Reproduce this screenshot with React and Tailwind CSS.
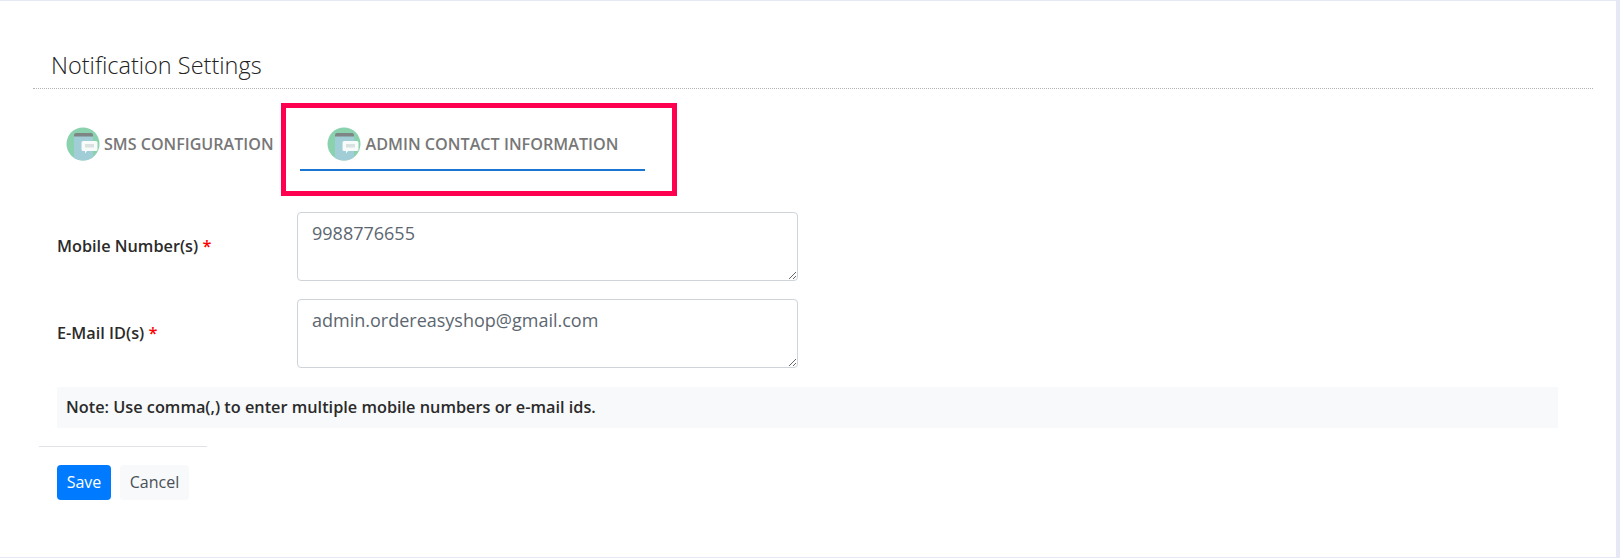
import React from 'react'

function TabIcon({ id }) {
  return (
    <svg width="34" height="34" viewBox="0 0 34 34" className="shrink-0">
      <defs>
        <clipPath id={id}>
          <circle cx="17" cy="17" r="16.5" />
        </clipPath>
      </defs>
      <circle cx="17" cy="17" r="16.5" fill="#8ad1ae" />
      <g clipPath={`url(#${id})`}>
        <rect x="8" y="6" width="19" height="30" rx="2" fill="#a0cdd6" />
        <path d="M8 9.500V8a2 2 0 0 1 2-2h15a2 2 0 0 1 2 2v1.500z" fill="#7f8585" />
      </g>
      <path d="M17 14h13a1.500 1.500 0 0 1 1.500 1.500v7a1.500 1.500 0 0 1-1.500 1.500h-9l-2 2.500v-2.500h-2a1.500 1.500 0 0 1-1.500-1.500v-7A1.500 1.500 0 0 1 17 14z" fill="#f7fbfa" />
      <rect x="19" y="17" width="9" height="3.500" fill="#d9e1e1" />
    </svg>
  )
}

function Field({ label, value, className }) {
  return (
    <div className={`flex items-center ${className}`}>
      <label className="w-[240px] shrink-0 text-[16.300px] font-semibold text-[#2b2b2b]">
        {label} <span className="text-[#ff0000]">*</span>
      </label>
      <textarea
        defaultValue={value}
        className="w-[501px] h-[69px] rounded border border-[#ced4da] px-[14px] py-[7px] text-[18px] leading-[27px] text-[#5c6670] outline-none"
      />
    </div>
  )
}

export default function App() {
  return (
    <div className="h-[558px] w-[1620px] overflow-hidden bg-[#e6e8f5] pr-1 pt-px pb-px font-['Open_Sans',sans-serif]">
      <div className="h-full bg-white pt-[48px]">
        <div className="ml-[33px] w-[1560px] border-b border-dotted border-[#b4b4b4] pb-[6px] pl-[18px]">
          <h1 className="text-[23.500px] leading-[33px] font-light text-[#222222]">Notification Settings</h1>
        </div>

        <div className="relative ml-[33px] flex h-[108px] items-start">
          <div className="ml-[33px] mt-[38px] flex h-[34px] items-center">
            <TabIcon id="tab-sms" />
            <span className="ml-[4px] text-[16.100px] font-semibold text-[#777777]">SMS CONFIGURATION</span>
          </div>
          <div className="ml-[26px] mt-[38px] h-[44px] w-[345px] border-b-2 border-[#1976d2] pl-[27px]">
            <div className="flex h-[34px] items-center">
              <TabIcon id="tab-admin" />
              <span className="ml-[5px] text-[16.200px] font-semibold text-[#777777]">ADMIN CONTACT INFORMATION</span>
            </div>
          </div>
          {/* highlight drawn over the active tab */}
          <div className="absolute left-[248px] top-[14px] h-[93px] w-[396px] border-[5px] border-[#ff0050]" />
        </div>

        <div className="ml-[57px] mt-[15px] w-[1501px]">
          <Field label="Mobile Number(s)" value="9988776655" />
          <Field label="E-Mail ID(s)" value="admin.ordereasyshop@gmail.com" className="mt-[18px]" />
          <div className="mt-[19px] flex h-[41px] items-center bg-[#f8f9fa] px-[9px] pb-px text-[16.300px] font-semibold text-[#2b2b2b]">
            Note: Use comma(,) to enter multiple mobile numbers or e-mail ids.
          </div>
        </div>

        <hr className="ml-[39px] mt-[18px] w-[168px] border-t border-[#e1e1e8]" />

        <div className="ml-[57px] mt-[18px] flex gap-[9px]">
          <button className="h-[35px] w-[54px] rounded bg-[#007bff] pb-[2px] text-[16px] text-white">Save</button>
          <button className="h-[35px] w-[69px] rounded bg-[#f8f9fa] pb-[2px] text-[16px] text-[#495057]">Cancel</button>
        </div>
      </div>
    </div>
  )
}
